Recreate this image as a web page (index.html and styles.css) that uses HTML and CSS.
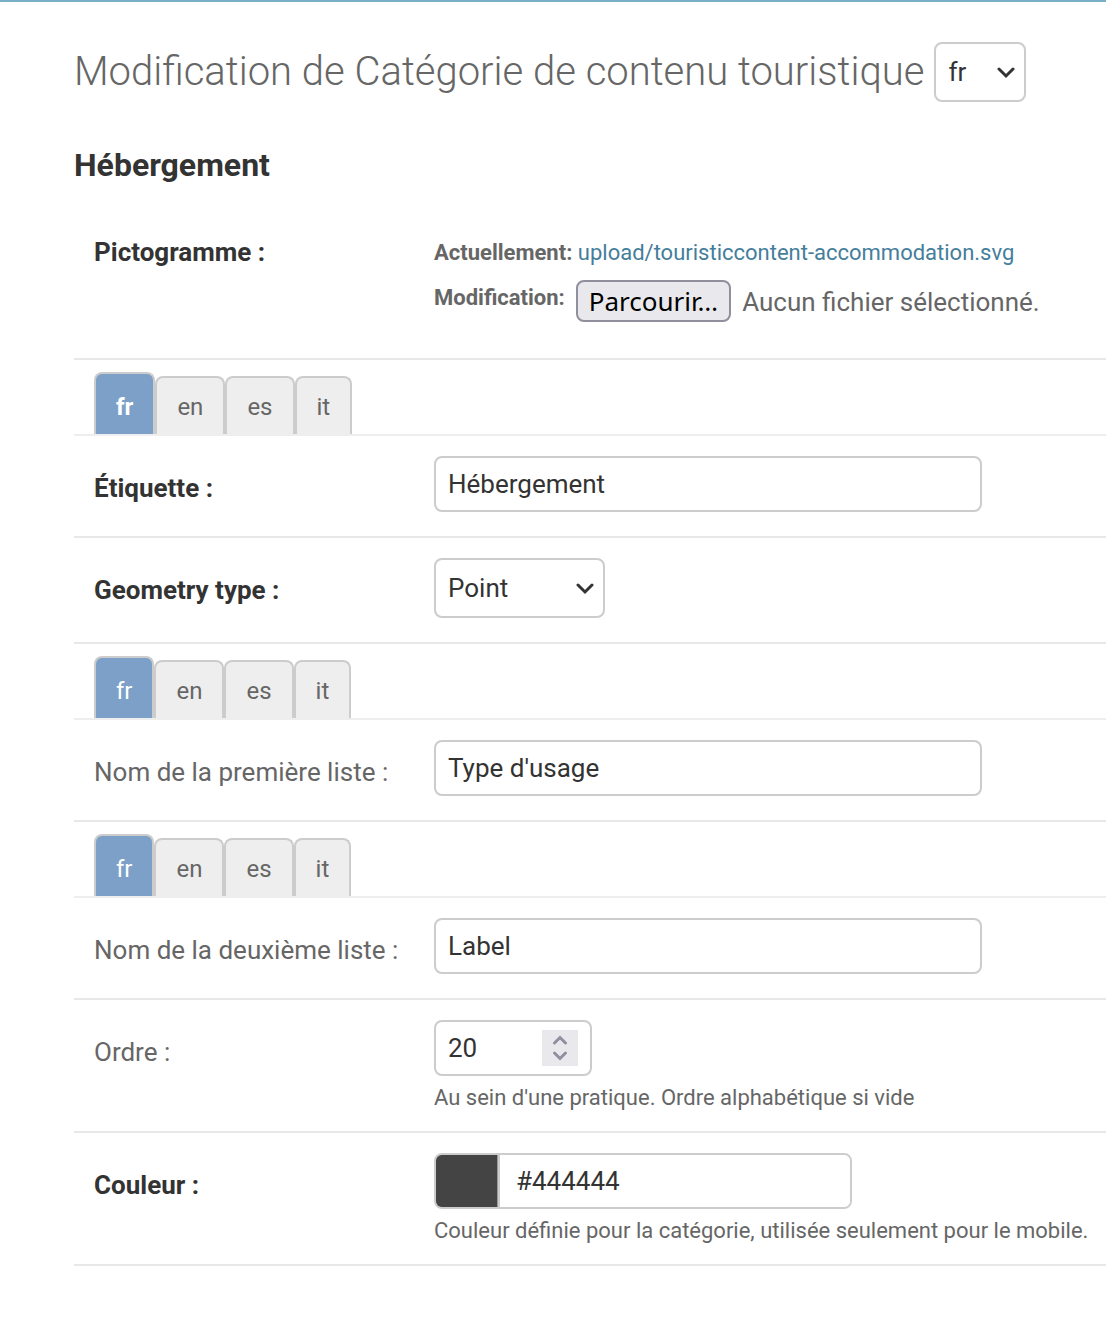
FILE: index.html
```html
<!DOCTYPE html>
<html lang="fr">
<head>
<meta charset="utf-8">
<meta name="viewport" content="width=device-width, initial-scale=1">
<title>Modification de Catégorie de contenu touristique</title>
<link rel="stylesheet" href="styles.css">
</head>
<body>
<main class="content">
  <header class="page-header">
    <h1>Modification de Catégorie de contenu touristique</h1>
    <select class="control lang-select" aria-label="Langue">
      <option>fr</option><option>en</option><option>es</option><option>it</option>
    </select>
  </header>
  <h2>Hébergement</h2>

  <form>
    <div class="row file-row">
      <label class="label required" for="pictogram">Pictogramme :</label>
      <div class="field">
        <p class="file-line"><strong>Actuellement:</strong> <a href="#">upload/touristiccontent-accommodation.svg</a></p>
        <div class="file-picker">
          <strong>Modification:</strong>
          <input class="file-input" type="file" id="pictogram">
          <label class="file-button" for="pictogram">Parcourir…</label>
          <span class="file-name">Aucun fichier sélectionné.</span>
        </div>
      </div>
    </div>

    <div class="tabs">
      <button type="button" class="tab active required-tab">fr</button>
      <button type="button" class="tab">en</button>
      <button type="button" class="tab">es</button>
      <button type="button" class="tab">it</button>
    </div>
    <div class="row">
      <label class="label required" for="label">Étiquette :</label>
      <div class="field"><input class="control text" type="text" id="label" value="Hébergement"></div>
    </div>

    <div class="row">
      <label class="label required" for="geometry">Geometry type :</label>
      <div class="field">
        <select class="control geometry-select" id="geometry">
          <option>Point</option><option>Line</option><option>Polygon</option><option>Any</option>
        </select>
      </div>
    </div>

    <div class="tabs">
      <button type="button" class="tab active">fr</button>
      <button type="button" class="tab">en</button>
      <button type="button" class="tab">es</button>
      <button type="button" class="tab">it</button>
    </div>
    <div class="row">
      <label class="label" for="type1">Nom de la première liste :</label>
      <div class="field"><input class="control text" type="text" id="type1" value="Type d'usage"></div>
    </div>

    <div class="tabs">
      <button type="button" class="tab active">fr</button>
      <button type="button" class="tab">en</button>
      <button type="button" class="tab">es</button>
      <button type="button" class="tab">it</button>
    </div>
    <div class="row">
      <label class="label" for="type2">Nom de la deuxième liste :</label>
      <div class="field"><input class="control text" type="text" id="type2" value="Label"></div>
    </div>

    <div class="row with-help">
      <label class="label" for="order">Ordre :</label>
      <div class="field">
        <input class="control number" type="number" id="order" value="20">
        <p class="help">Au sein d'une pratique. Ordre alphabétique si vide</p>
      </div>
    </div>

    <div class="row with-help">
      <label class="label required" for="color">Couleur :</label>
      <div class="field">
        <div class="control color-field">
          <input class="swatch" type="color" value="#444444" aria-label="Choisir la couleur">
          <input class="color-value" type="text" id="color" value="#444444">
        </div>
        <p class="help">Couleur définie pour la catégorie, utilisée seulement pour le mobile.</p>
      </div>
    </div>
  </form>
</main>
</body>
</html>
```
FILE: styles.css
```css
* {
  box-sizing: border-box;
}

body {
  margin: 0;
  border-top: 2px solid #79aec8;
  background: #fff;
  color: #666;
  font-family: Roboto, "Liberation Sans", sans-serif;
  font-size: 26px;
  line-height: 32px;
}

.content {
  padding: 40px 0 56px 74px;
}

.page-header {
  display: flex;
  align-items: center;
  gap: 10px;
}

h1 {
  margin: 0;
  font-size: 40px;
  font-weight: 300;
  line-height: 56px;
  white-space: nowrap;
}

h2 {
  margin: 44px 0 16px;
  color: #333;
  font-size: 32px;
  font-weight: 700;
  line-height: 38px;
}

a {
  color: #447e9b;
  text-decoration: none;
}

.row {
  display: grid;
  grid-template-columns: 340px minmax(0, 1fr);
  padding: 20px 0 24px 20px;
  border-bottom: 2px solid #e8e8e8;
}

.with-help {
  padding-bottom: 20px;
}

.file-row {
  padding-bottom: 34px;
}

.label {
  padding-top: 16px;
}

.required {
  color: #333;
  font-weight: 700;
}

.control {
  display: block;
  height: 56px;
  margin: 0;
  padding: 0 12px;
  border: 2px solid #ccc;
  border-radius: 8px;
  background-color: #fff;
  color: #333;
  font: inherit;
}

.text {
  width: 548px;
  max-width: 100%;
}

select.control {
  height: 60px;
  appearance: none;
  background-image: url("data:image/svg+xml,%3Csvg xmlns='http://www.w3.org/2000/svg' width='18' height='14' fill='none' stroke='%23333' stroke-width='3' stroke-linecap='round'%3E%3Cpath d='M2 4l7 7 7-7'/%3E%3C/svg%3E");
  background-repeat: no-repeat;
  background-position: right 9px center;
}

.lang-select {
  width: 92px;
}

.geometry-select {
  width: 171px;
}

.file-line,
.file-picker {
  margin: 0;
  font-size: 22px;
}

.file-line {
  padding: 17px 0 11px;
}

.file-picker {
  display: flex;
  gap: 11px;
}

.file-picker strong {
  line-height: 36px;
}

.file-input {
  position: absolute;
  width: 1px;
  height: 1px;
  opacity: 0;
}

.file-button {
  height: 42px;
  padding: 0 11px;
  border: 2px solid #8f8f9d;
  border-radius: 8px;
  background: #e9e9ed;
  color: #000;
  font-family: "Noto Sans", sans-serif;
  font-size: 26px;
  line-height: 38px;
}

.file-name {
  font-size: 26px;
  line-height: 44px;
}

.tabs {
  display: flex;
  align-items: flex-end;
  padding: 12px 0 0 20px;
  border-bottom: 2px solid #eee;
}

.tab {
  height: 58px;
  padding: 2px 20px 0;
  border: 2px solid #ccc;
  border-bottom: 0;
  border-radius: 8px 8px 0 0;
  background: #eee;
  color: #666;
  font-family: inherit;
  font-size: 24px;
}

.tab.active {
  height: 62px;
  padding-top: 6px;
  background: #7ca0c7;
  color: #fff;
}

.required-tab {
  font-weight: 700;
}

.number {
  width: 158px;
  appearance: textfield;
  background-image: url("data:image/svg+xml,%3Csvg xmlns='http://www.w3.org/2000/svg' width='36' height='36' fill='none' stroke='%238f8f9d' stroke-width='3' stroke-linecap='round'%3E%3Cpath fill='%23e9e9ed' stroke='none' d='M0 0h36v36H0z'/%3E%3Cpath d='M12.500 13l5.500-5.500 5.500 5.500M12.500 23l5.500 5.500 5.500-5.500'/%3E%3C/svg%3E");
  background-repeat: no-repeat;
  background-position: right 12px center;
}

.number::-webkit-inner-spin-button {
  appearance: none;
}

.color-field {
  display: flex;
  width: 418px;
  max-width: 100%;
  padding: 0;
  overflow: hidden;
}

.swatch {
  width: 64px;
  height: 100%;
  padding: 0;
  border: 0;
  border-right: 2px solid #ccc;
  background: #999;
  appearance: none;
}

.swatch::-webkit-color-swatch-wrapper {
  padding: 0 1px 0 0;
}

.swatch::-webkit-color-swatch {
  border: 0;
  border-radius: 0;
}

.color-value {
  flex: 1;
  min-width: 0;
  padding: 0 16px;
  border: 0;
  color: #333;
  font: inherit;
}

.help {
  margin: 8px 0 0;
  font-size: 22px;
  line-height: 27px;
}
```
